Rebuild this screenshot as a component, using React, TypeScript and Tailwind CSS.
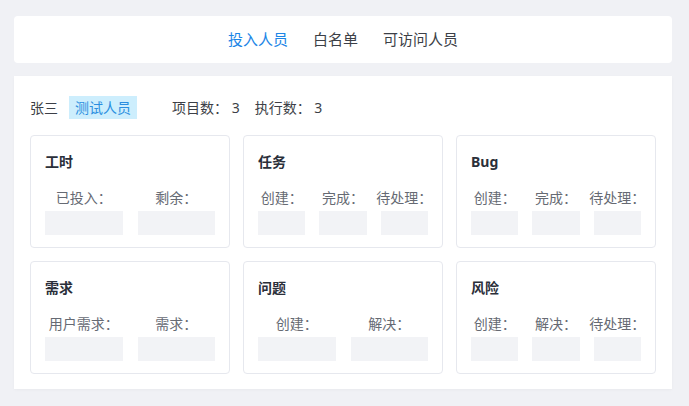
type statProps = {
    title: string
    labels: string[]
}

function StatCard ({ title, labels }: statProps) {
    return (
        <div className="rounded border border-[#e6e8ee] bg-white px-[14px] pt-4 pb-3">
            <h3 className="text-sm leading-5 font-bold text-[#2b2f3a]">{title}</h3>
            <div className={labels.length === 2 ? "grid grid-cols-2 gap-x-[15px] mt-4" : "grid grid-cols-3 gap-x-[14px] mt-4"}>
                {labels.map((label, key) => (
                    <div key={key} className="flex flex-col items-center">
                        <span className="text-sm leading-5 whitespace-nowrap text-[#666a73]">{label}：</span>
                        <div className="mt-[3px] h-6 w-full bg-[#f2f3f6]"></div>
                    </div>
                ))}
            </div>
        </div>
    )
}

const cards = [
    { title: "工时", labels: ["已投入", "剩余"] },
    { title: "任务", labels: ["创建", "完成", "待处理"] },
    { title: "Bug", labels: ["创建", "完成", "待处理"] },
    { title: "需求", labels: ["用户需求", "需求"] },
    { title: "问题", labels: ["创建", "解决"] },
    { title: "风险", labels: ["创建", "解决", "待处理"] },
]

export default function App () {
    return (
        <div
            className="min-h-[406px] bg-[#f0f1f5] pl-[14px] pr-[17px] pt-4 pb-[17px]"
            style={{ fontFamily: '"Noto Sans", "Noto Sans CJK SC", sans-serif' }}
        >
            <div className="h-[47px] rounded bg-white flex items-center justify-center gap-[25px] text-[15px] text-[#3c3f47]">
                <span className="text-[#1d86e6]">投入人员</span>
                <span>白名单</span>
                <span>可访问人员</span>
            </div>
            <div className="mt-[13px] bg-white px-4 pt-5 pb-[15px] shadow-[0_1px_3px_rgba(0,0,0,0.03)]">
                <div className="flex items-center h-[23px] text-sm text-[#3c3f47]">
                    <span>张三</span>
                    <span className="ml-[11px] h-[23px] leading-[23px] px-[6px] bg-[#cdeefd] text-[#2a8ee0]">测试人员</span>
                    <span className="ml-[35px]">项目数：&nbsp;3</span>
                    <span className="ml-[15px]">执行数：&nbsp;3</span>
                </div>
                <div className="grid grid-cols-3 gap-[13px] mt-4">
                    {cards.map((card, key) => (
                        <StatCard key={key} title={card.title} labels={card.labels} />
                    ))}
                </div>
            </div>
        </div>
    )
}
